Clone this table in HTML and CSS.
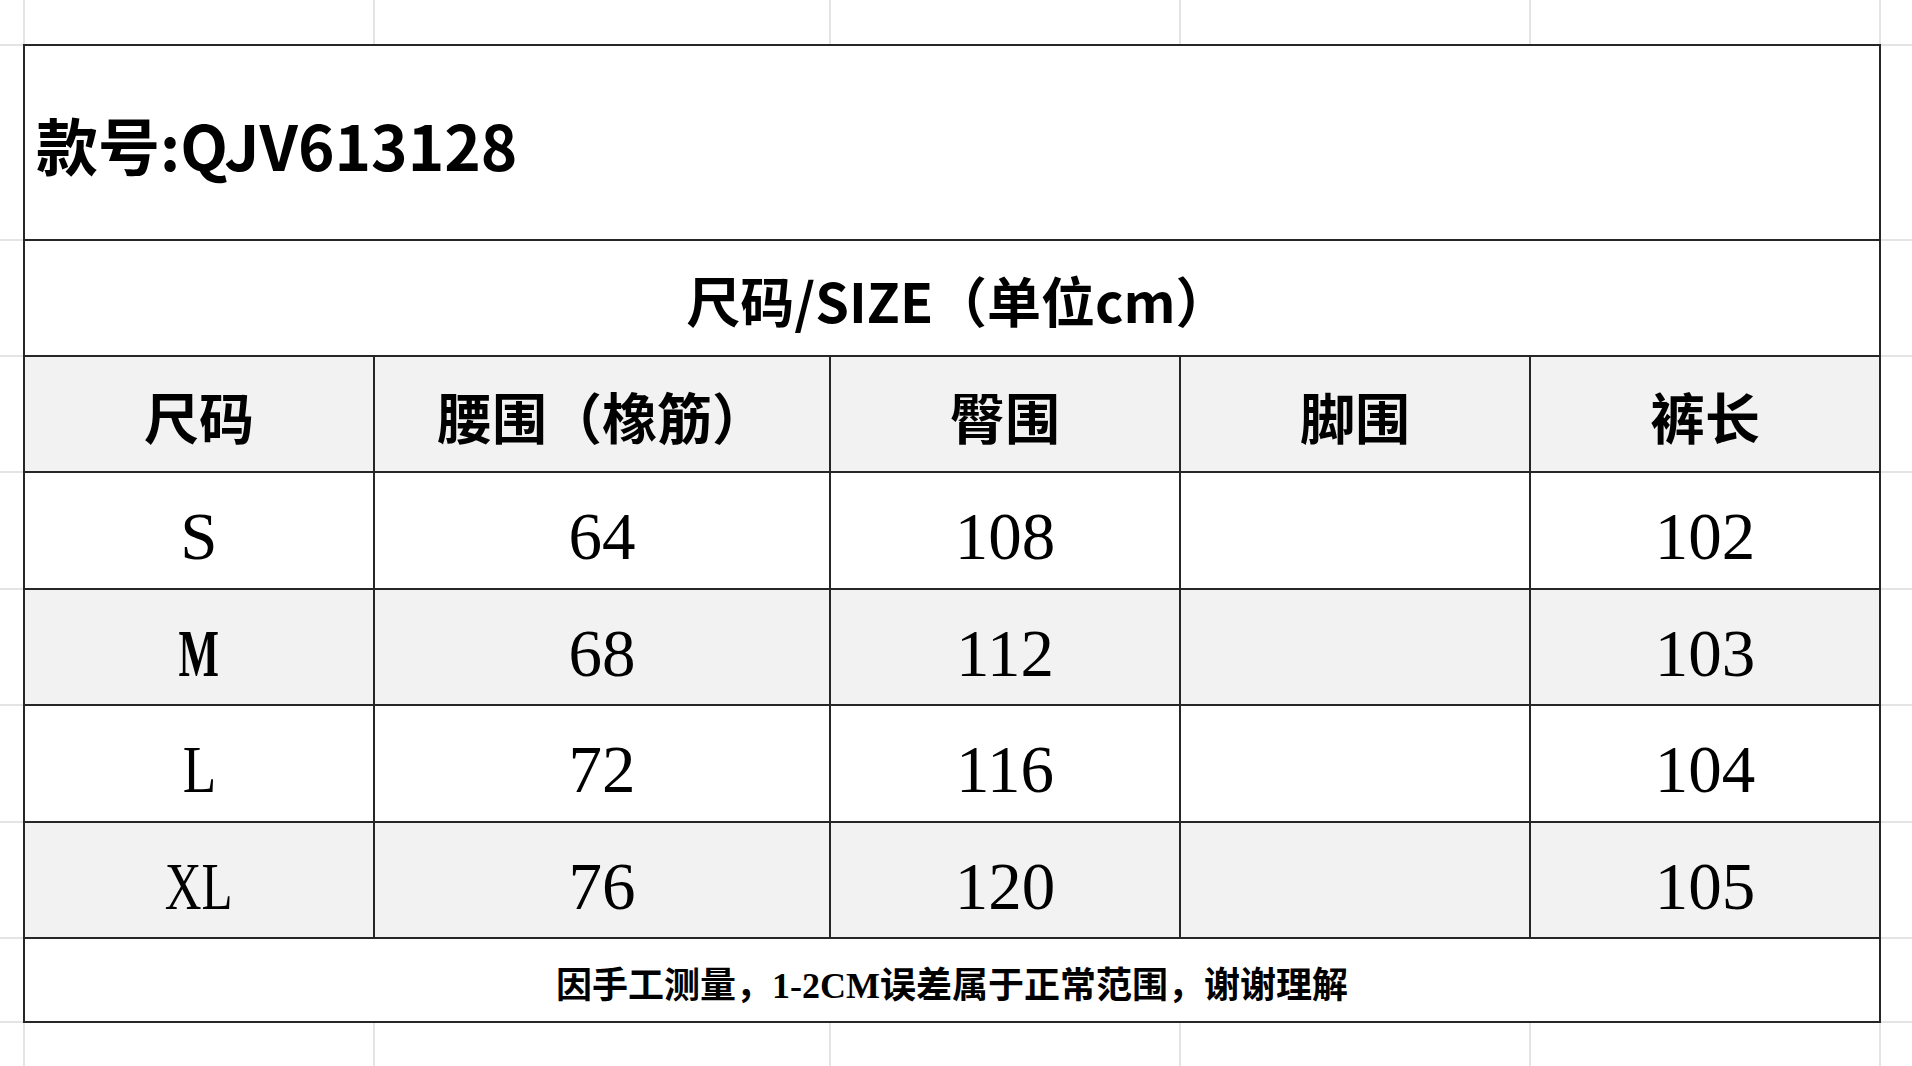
FILE: index.html
```html
<!DOCTYPE html>
<html lang="zh-CN">
<head>
<meta charset="utf-8">
<title>尺码表</title>
<link rel="stylesheet" href="styles.css">
</head>
<body>
<div class="sheet">
  <div class="tbl">
    <div class="cell span title">款号:QJV613128</div>
    <div class="cell span size-title">尺码/SIZE（单位cm）</div>

    <div class="cell head">尺码</div>
    <div class="cell head">腰围（橡筋）</div>
    <div class="cell head">臀围</div>
    <div class="cell head">脚围</div>
    <div class="cell head">裤长</div>

    <div class="cell num">S</div>
    <div class="cell num">64</div>
    <div class="cell num">108</div>
    <div class="cell num"></div>
    <div class="cell num">102</div>

    <div class="cell num alt"><span class="cond-m">M</span></div>
    <div class="cell num alt">68</div>
    <div class="cell num alt">112</div>
    <div class="cell num alt"></div>
    <div class="cell num alt">103</div>

    <div class="cell num"><span class="cond-l">L</span></div>
    <div class="cell num">72</div>
    <div class="cell num">116</div>
    <div class="cell num"></div>
    <div class="cell num">104</div>

    <div class="cell num alt"><span class="cond-xl">XL</span></div>
    <div class="cell num alt">76</div>
    <div class="cell num alt">120</div>
    <div class="cell num alt"></div>
    <div class="cell num alt">105</div>

    <div class="cell span note">因手工测量，1-2CM误差属于正常范围，谢谢理解</div>
  </div>

  <div class="c"></div><div class="c"></div><div class="c"></div><div class="c"></div><div class="c"></div><div class="c"></div><div class="c"></div>
  <div class="c"></div><div class="c"></div>
  <div class="c"></div><div class="c"></div>
  <div class="c"></div><div class="c"></div>
  <div class="c"></div><div class="c"></div>
  <div class="c"></div><div class="c"></div>
  <div class="c"></div><div class="c"></div>
  <div class="c"></div><div class="c"></div>
  <div class="c"></div><div class="c"></div>
  <div class="c"></div><div class="c"></div><div class="c"></div><div class="c"></div><div class="c"></div><div class="c"></div><div class="c"></div>
</div>
</body>
</html>
```

FILE: styles.css
```css
html, body {
  margin: 0;
  padding: 0;
  background: #ffffff;
}

body {
  width: 1912px;
  height: 1066px;
  overflow: hidden;
}

.sheet {
  display: grid;
  grid-template-columns: 23px 348px 454px 348px 348px 348px 1fr;
  grid-template-rows: 44px 193px 114px 114px 115px 114px 115px 114px 82px 1fr;
  gap: 2px;
  background: #e4e4e4;
  width: 1912px;
  height: 1066px;
}

.c {
  background: #ffffff;
}

.tbl {
  grid-column: 2 / 7;
  grid-row: 2 / 10;
  display: grid;
  grid-template-columns: 348px 454px 348px 348px 348px;
  grid-template-rows: 193px 114px 114px 115px 114px 115px 114px 82px;
  gap: 2px;
  background: #262626;
  outline: 2px solid #262626;
  position: relative;
  z-index: 1;
}

.cell {
  display: flex;
  align-items: center;
  justify-content: center;
  background: #ffffff;
  color: #000000;
  white-space: nowrap;
}

.span {
  grid-column: 1 / -1;
}

.title {
  justify-content: flex-start;
  padding-left: 11px;
  padding-top: 2px;
  font-family: "Noto Sans CJK SC", sans-serif;
  font-weight: 700;
  font-size: 62px;
}

.size-title {
  font-family: "Noto Sans CJK SC", sans-serif;
  font-weight: 700;
  font-size: 54px;
  padding-top: 2px;
  padding-left: 12px;
}

.head {
  background: #f2f2f2;
  font-family: "Noto Sans CJK SC", sans-serif;
  font-weight: 700;
  font-size: 55px;
  padding-top: 2px;
}

.num {
  font-family: "Liberation Serif", "Noto Sans CJK SC", serif;
  font-size: 67px;
  padding-top: 12px;
}

.alt {
  background: #f2f2f2;
}

.cond-m,
.cond-l,
.cond-xl {
  display: inline-block;
}

.cond-m {
  transform: scaleX(0.64);
  font-weight: 700;
}

.cond-l {
  transform: scaleX(0.82);
}

.cond-xl {
  transform: scaleX(0.76);
}

.note {
  font-family: "Liberation Serif", "Noto Sans CJK SC", serif;
  font-weight: 700;
  font-size: 36px;
  padding-top: 4px;
}
```
